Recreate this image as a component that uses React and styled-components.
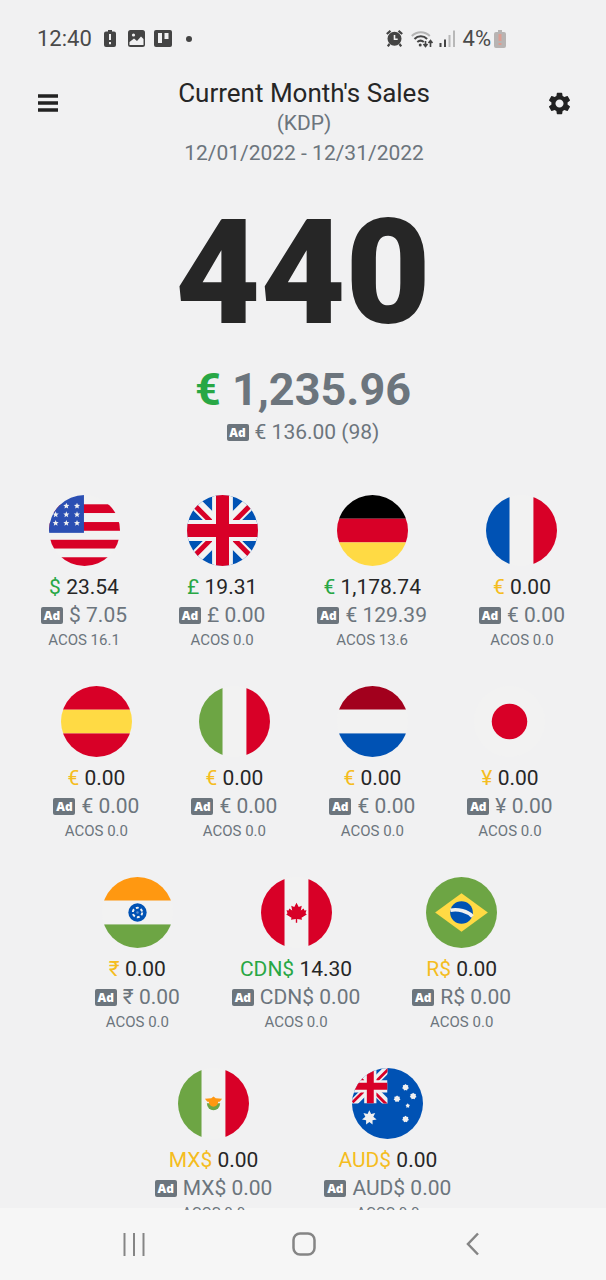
import React from "react";
import styled, { createGlobalStyle } from "styled-components";
import { MdSettings } from "react-icons/md";

const GlobalStyle = createGlobalStyle`
  * { box-sizing: border-box; }
  body {
    margin: 0;
    background: #f1f1f2;
    color: #262626;
    font-family: Roboto, "Liberation Sans", sans-serif;
  }
`;

const muted = "#6c757d";
const tones = { up: "#28a745", idle: "#f5bd1f" };

const Screen = styled.div`
  display: flex;
  flex-direction: column;
  height: 100vh;
`;

const StatusBar = styled.div`
  display: flex;
  align-items: center;
  justify-content: space-between;
  flex: none;
  height: 77px;
  padding: 0 100px 0 37px;
  color: #4a4a4a;
  font-size: 22px;
`;

const StatusGroup = styled.div`
  display: flex;
  align-items: center;
  gap: ${(p) => p.$gap}px;
`;

const Content = styled.main`
  position: relative;
  z-index: 1;
  flex: 1;
  min-height: 0;
  overflow-y: auto;
  scrollbar-width: none;
`;

const Header = styled.header`
  display: flex;
  justify-content: space-between;
  align-items: flex-start;
  padding: 0 31px 0 33px;
`;

const IconButton = styled.button`
  display: flex;
  align-items: center;
  justify-content: center;
  width: 30px;
  height: 32px;
  margin-top: 10px;
  padding: 0;
  border: 0;
  background: none;
  color: #222;
`;

const Heading = styled.div`
  text-align: center;
`;

const Title = styled.h1`
  margin: 0;
  font-size: 26px;
  line-height: 32px;
  font-weight: 400;
`;

const Subtitle = styled.p`
  margin: 0;
  color: ${muted};
  font-size: 21px;
  line-height: 29px;
`;

const Dates = styled(Subtitle)`
  line-height: 30px;
`;

const Summary = styled.section`
  display: flex;
  flex-direction: column;
  align-items: center;
  margin-top: 25px;
`;

const Units = styled.div`
  font-size: 147px;
  line-height: 160px;
  font-weight: 900;
`;

const Revenue = styled.div`
  margin-top: 9px;
  color: ${muted};
  font-size: 45px;
  line-height: 56px;
  font-weight: 700;
`;

const Currency = styled.span`
  color: ${(p) => tones[p.$tone]};
`;

const Markets = styled.ul`
  display: flex;
  flex-wrap: wrap;
  justify-content: center;
  margin: 0;
  padding: 48px 0 24px;
  list-style: none;
  row-gap: 36px;
`;

const MarketItem = styled.li`
  display: flex;
  flex-direction: column;
  align-items: center;
  padding: 0 26px;
`;

const Amount = styled.div`
  margin-top: 7px;
  font-size: 21px;
  line-height: 28px;
`;

const AdLine = styled.div`
  display: flex;
  align-items: center;
  gap: 6px;
  color: ${muted};
  font-size: 21px;
  line-height: 29px;
`;

const AdBadge = styled.span`
  width: 22px;
  height: 17px;
  border-radius: 2px;
  background: ${muted};
  color: #fff;
  font-family: "Open Sans", sans-serif;
  font-size: 12px;
  line-height: 17px;
  font-weight: 800;
  text-align: center;
`;

const Acos = styled.div`
  color: ${muted};
  font-size: 15px;
  line-height: 20px;
`;

const FlagSvg = styled.svg`
  display: block;
  width: 71px;
  height: 71px;
  border-radius: 50%;
`;

const NavBar = styled.nav`
  display: flex;
  align-items: center;
  justify-content: space-between;
  flex: none;
  height: 72px;
  margin-top: -2px;
  padding: 0 111px 0 112px;
  background: #f6f6f6;
`;

const NavButton = styled.button`
  display: flex;
  justify-content: center;
  width: 44px;
  padding: 8px;
  border: 0;
  background: none;
  color: #858585;
`;

const RED = "#d80027";
const BLUE = "#0052b4";
const YELLOW = "#ffda44";
const GREEN = "#6da544";
const WHITE = "#f2f2f2";

function Bands({ colors, vertical }) {
  return colors.map((c, i) => (
    <rect
      key={i}
      x={vertical ? i * 171 : 0}
      y={vertical ? 0 : i * 171}
      width={vertical ? 171 : 512}
      height={vertical ? 512 : 171}
      fill={c}
    />
  ));
}

function Star({ x, y, r, points = 5, inner = 0.45 }) {
  const list = [];
  for (let i = 0; i < points * 2; i++) {
    const a = (Math.PI * i) / points - Math.PI / 2;
    const d = i % 2 ? r * inner : r;
    list.push(`${x + d * Math.cos(a)},${y + d * Math.sin(a)}`);
  }
  return <polygon points={list.join(" ")} fill="#f0f0f0" />;
}

const flags = {
  us: (
    <>
      <rect width="512" height="512" fill={WHITE} />
      {[67, 195, 323, 449].map((y) => (
        <rect key={y} y={y} width="512" height="63" fill={RED} />
      ))}
      <rect width="252" height="273" fill="#2b4fb3" />
      {[[125, 79], [202, 79], [48, 141], [125, 141], [202, 141], [48, 203], [125, 203], [202, 203]].map(
        ([x, y]) => <Star key={`${x}-${y}`} x={x} y={y} r={23} />
      )}
    </>
  ),
  uk: (
    <>
      <rect width="512" height="512" fill={BLUE} />
      <path d="M0 0 512 512M512 0 0 512" stroke={WHITE} strokeWidth="94" />
      <path d="M40 60 196 216M472 60 316 216M40 452 196 296M472 452 316 296" stroke={RED} strokeWidth="36" />
      <path d="M256 0V512M0 256H512" stroke={WHITE} strokeWidth="150" />
      <path d="M256 0V512M0 256H512" stroke={RED} strokeWidth="94" />
    </>
  ),
  de: <Bands colors={["#000", RED, YELLOW]} />,
  fr: <Bands vertical colors={[BLUE, WHITE, RED]} />,
  es: <Bands colors={[RED, YELLOW, RED]} />,
  it: <Bands vertical colors={[GREEN, WHITE, RED]} />,
  nl: <Bands colors={["#a2001d", WHITE, BLUE]} />,
  jp: (
    <>
      <rect width="512" height="512" fill={WHITE} />
      <circle cx="256" cy="256" r="128" fill={RED} />
    </>
  ),
  in: (
    <>
      <Bands colors={["#ff9811", WHITE, GREEN]} />
      <circle cx="256" cy="256" r="66" fill={BLUE} />
      <circle cx="256" cy="256" r="34" fill="none" stroke="#f0f0f0" strokeWidth="14" strokeDasharray="21 15" />
      <circle cx="256" cy="256" r="9" fill="#5b8fd0" />
    </>
  ),
  ca: (
    <>
      <Bands vertical colors={[RED, WHITE, RED]} />
      <path
        d="M256 186 240 216 218 208 225 242 204 228 199 242 184 240 191 262 182 270 220 294 216 309 251 303V330H261V303L296 309 292 294 330 270 321 262 328 240 313 242 308 228 287 242 294 208 272 216Z"
        fill={RED}
      />
    </>
  ),
  br: (
    <>
      <rect width="512" height="512" fill={GREEN} />
      <path d="M256 118 446 256 256 394 66 256Z" fill={YELLOW} />
      <circle cx="256" cy="256" r="82" fill={BLUE} />
      <path d="M176 240C232 228 300 248 335 284" fill="none" stroke="#f0f0f0" strokeWidth="26" />
    </>
  ),
  mx: (
    <>
      <Bands vertical colors={[GREEN, WHITE, RED]} />
      <path d="M208 254a48 50 0 0 0 96 0Z" fill={GREEN} />
      <path d="M194 222 240 218 256 206 272 218 318 222 300 244H290A34 36 0 0 1 222 244H212Z" fill="#ff9811" />
    </>
  ),
  au: (
    <>
      <rect width="512" height="512" fill={BLUE} />
      <svg width="256" height="256" viewBox="0 0 256 256">
        <path d="M0 0 262 262M262 0 0 262" stroke="#f0f0f0" strokeWidth="56" />
        <path d="M8 22 120 134M262 8 140 130M4 248 110 142M248 262 140 154" stroke={RED} strokeWidth="20" />
        <path d="M132 0V256M0 132H256" stroke="#f0f0f0" strokeWidth="88" />
        <path d="M132 0V256M0 132H256" stroke={RED} strokeWidth="50" />
      </svg>
      <Star x={125} y={359} r={54} points={7} inner={0.55} />
      <Star x={386} y={140} r={25} points={7} inner={0.75} />
      <Star x={441} y={203} r={25} points={7} inner={0.75} />
      <Star x={325} y={223} r={25} points={7} inner={0.75} />
      <Star x={402} y={272} r={17} inner={0.6} />
      <Star x={386} y={369} r={25} points={7} inner={0.75} />
    </>
  ),
};

const markets = [
  { id: "us", name: "United States", cur: "$", tone: "up", amount: "23.54", ad: "7.05", acos: "16.1" },
  { id: "uk", name: "United Kingdom", cur: "£", tone: "up", amount: "19.31", ad: "0.00", acos: "0.0" },
  { id: "de", name: "Germany", cur: "€", tone: "up", amount: "1,178.74", ad: "129.39", acos: "13.6" },
  { id: "fr", name: "France", cur: "€", tone: "idle", amount: "0.00", ad: "0.00", acos: "0.0" },
  { id: "es", name: "Spain", cur: "€", tone: "idle", amount: "0.00", ad: "0.00", acos: "0.0" },
  { id: "it", name: "Italy", cur: "€", tone: "idle", amount: "0.00", ad: "0.00", acos: "0.0" },
  { id: "nl", name: "Netherlands", cur: "€", tone: "idle", amount: "0.00", ad: "0.00", acos: "0.0" },
  { id: "jp", name: "Japan", cur: "¥", tone: "idle", amount: "0.00", ad: "0.00", acos: "0.0" },
  { id: "in", name: "India", cur: "₹", tone: "idle", amount: "0.00", ad: "0.00", acos: "0.0" },
  { id: "ca", name: "Canada", cur: "CDN$", tone: "up", amount: "14.30", ad: "0.00", acos: "0.0" },
  { id: "br", name: "Brazil", cur: "R$", tone: "idle", amount: "0.00", ad: "0.00", acos: "0.0" },
  { id: "mx", name: "Mexico", cur: "MX$", tone: "idle", amount: "0.00", ad: "0.00", acos: "0.0" },
  { id: "au", name: "Australia", cur: "AUD$", tone: "idle", amount: "0.00", ad: "0.00", acos: "0.0" },
];

function AdSpend({ children }) {
  return (
    <AdLine>
      <AdBadge>Ad</AdBadge>
      <span>{children}</span>
    </AdLine>
  );
}

function Market({ market }) {
  return (
    <MarketItem>
      <FlagSvg viewBox="0 0 512 512" role="img" aria-label={market.name}>
        {flags[market.id]}
      </FlagSvg>
      <Amount>
        <Currency $tone={market.tone}>{market.cur}</Currency> {market.amount}
      </Amount>
      <AdSpend>
        {market.cur} {market.ad}
      </AdSpend>
      <Acos>ACOS {market.acos}</Acos>
    </MarketItem>
  );
}

function Status() {
  return (
    <StatusBar>
      <StatusGroup $gap={12}>
        <span>12:40</span>
        <svg width="12" height="17" viewBox="0 0 12 17" aria-hidden="true">
          <path d="M4 0h4v1.500h2a2 2 0 0 1 2 2V15a2 2 0 0 1-2 2H2a2 2 0 0 1-2-2V3.500a2 2 0 0 1 2-2h2z" fill="#444" />
          <path d="M6 4v6M6 12v2.200" stroke="#f1f1f2" strokeWidth="2" />
        </svg>
        <StatusGroup $gap={9}>
          <svg width="17" height="17" viewBox="0 0 17 17" aria-hidden="true">
            <rect width="17" height="17" rx="2.500" fill="#444" />
            <circle cx="5.500" cy="5" r="1.600" fill="#f1f1f2" />
            <path d="M1.500 12 6 8.500 9 11 13 6.500 15.500 9V15H1.500Z" fill="#f1f1f2" />
          </svg>
          <StatusGroup $gap={14}>
            <svg width="18" height="17" viewBox="0 0 18 17" aria-hidden="true">
              <rect width="18" height="17" rx="2" fill="#444" />
              <rect x="4" y="3" width="4" height="10" fill="#f1f1f2" />
              <rect x="10.500" y="3" width="4" height="6" fill="#f1f1f2" />
            </svg>
            <svg width="6" height="6" viewBox="0 0 6 6" aria-hidden="true">
              <circle cx="3" cy="3" r="3" fill="#444" />
            </svg>
          </StatusGroup>
        </StatusGroup>
      </StatusGroup>
      <StatusGroup $gap={8}>
        <svg width="17" height="17" viewBox="0 0 17 17" aria-hidden="true">
          <circle cx="8.500" cy="8.800" r="7" fill="#444" />
          <path d="M.8 4 4.500.8M16.200 4 12.500.8M3.500 14 1.800 16.300M13.500 14l1.700 2.300" stroke="#444" strokeWidth="2.200" />
          <path d="M8.500 5v4.200h3.200" fill="none" stroke="#f1f1f2" strokeWidth="1.600" />
        </svg>
        <StatusGroup $gap={5}>
          <svg width="23" height="18" viewBox="0 0 23 18" fill="none" aria-hidden="true">
            <path d="M.8 6a12.500 12.500 0 0 1 18 0" stroke="#b4b4b4" strokeWidth="2" />
            <path d="M3.500 9a8.800 8.800 0 0 1 12.600 0M6.300 12a5 5 0 0 1 6.500 0" stroke="#444" strokeWidth="2" />
            <circle cx="9.200" cy="15" r="1.500" fill="#444" />
            <path d="M14.500 11v5M12.500 14l2 2.500 2-2.500M19.500 17v-6M17.500 13l2-2.500 2 2.500" stroke="#444" strokeWidth="1.600" />
          </svg>
          <svg width="16" height="17" viewBox="0 0 16 17" aria-hidden="true">
            <path d="M1.500 17v-4M6 17V9.500" stroke="#444" strokeWidth="2" />
            <path d="M10.500 17V5M15 17V.5" stroke="#b8b8b8" strokeWidth="2" />
          </svg>
        </StatusGroup>
        <StatusGroup $gap={3}>
          <span>4%</span>
          <svg width="12" height="18" viewBox="0 0 12 18" aria-hidden="true">
            <path d="M4 0h4v2h2a2 2 0 0 1 2 2V16a2 2 0 0 1-2 2H2a2 2 0 0 1-2-2V4a2 2 0 0 1 2-2h2z" fill="#b8b4b3" />
            <path d="M6 4v7M6 13v2" stroke="#dd9d92" strokeWidth="3" />
          </svg>
        </StatusGroup>
      </StatusGroup>
    </StatusBar>
  );
}

export default function App() {
  return (
    <Screen>
      <GlobalStyle />
      <Status />
      <Content>
        <Header>
          <IconButton aria-label="Menu">
            <svg width="20" height="18" viewBox="0 0 20 18" aria-hidden="true">
              <path d="M0 2H20M0 9H20M0 16H20" stroke="currentColor" strokeWidth="3.500" />
            </svg>
          </IconButton>
          <Heading>
            <Title>Current Month's Sales</Title>
            <Subtitle>(KDP)</Subtitle>
            <Dates>12/01/2022 - 12/31/2022</Dates>
          </Heading>
          <IconButton aria-label="Settings">
            <MdSettings size={27} />
          </IconButton>
        </Header>
        <Summary>
          <Units>440</Units>
          <Revenue>
            <Currency $tone="up">€</Currency> 1,235.96
          </Revenue>
          <AdSpend>€ 136.00 (98)</AdSpend>
        </Summary>
        <Markets>
          {markets.map((m) => (
            <Market key={m.id} market={m} />
          ))}
        </Markets>
      </Content>
      <NavBar>
        <NavButton aria-label="Recent apps">
          <svg width="22" height="23" viewBox="0 0 22 23" aria-hidden="true">
            <path d="M1.500 0V23M11 0V23M20.500 0V23" stroke="currentColor" strokeWidth="2" />
          </svg>
        </NavButton>
        <NavButton aria-label="Home">
          <svg width="24" height="24" viewBox="0 0 24 24" aria-hidden="true">
            <rect x="1.500" y="1.500" width="21" height="21" rx="6.500" fill="none" stroke="currentColor" strokeWidth="2.500" />
          </svg>
        </NavButton>
        <NavButton aria-label="Back">
          <svg width="14" height="24" viewBox="0 0 14 24" aria-hidden="true">
            <path d="M12 1.500 2 12 12 22.500" fill="none" stroke="currentColor" strokeWidth="2.500" />
          </svg>
        </NavButton>
      </NavBar>
    </Screen>
  );
}
